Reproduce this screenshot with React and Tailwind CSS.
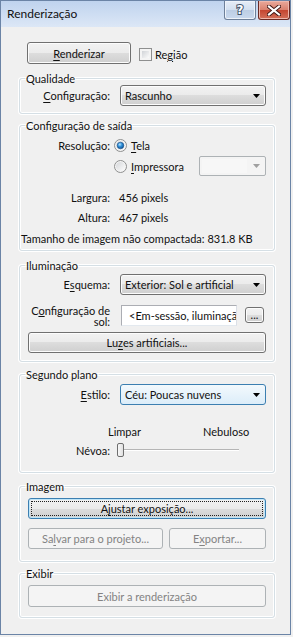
const btnBg = "bg-[linear-gradient(#f2f2f2_0%,#ebebeb_50%,#dddddd_50%,#cfcfcf_100%)]";

function Arrow({ color = "#000" }) {
  return (
    <svg width="7" height="4" viewBox="0 0 7 4">
      <polygon points="0,0 7,0 3.5,4" fill={color} />
    </svg>
  );
}

function Button({ children, className = "", disabled, focused }) {
  if (disabled) {
    return (
      <div className={`flex items-center justify-center whitespace-nowrap rounded-[3px] border border-[#adb2b5] bg-[#f4f4f4] text-[#838383] ${className}`}>
        {children}
      </div>
    );
  }
  return (
    <div
      className={`relative flex items-center justify-center whitespace-nowrap rounded-[3px] border ${
        focused ? "border-[#3c7fb1] shadow-[inset_0_0_0_1px_#bfe6f9]" : "border-[#707070] shadow-[inset_0_0_0_1px_#fcfcfc]"
      } ${btnBg} ${className}`}
    >
      {focused && <span className="absolute inset-[2px] border border-dotted border-[#222]" />}
      <span className="relative">{children}</span>
    </div>
  );
}

function Combo({ children, focused }) {
  return (
    <div
      className={`flex h-[21px] w-[146px] items-center rounded-[3px] border pl-[4px] pr-[5px] ${
        focused
          ? "border-[#3c7fb1] bg-[linear-gradient(#f3f9fd,#dcedf9)]"
          : `border-[#707070] shadow-[inset_0_0_0_1px_#fcfcfc] ${btnBg}`
      }`}
    >
      <span className="flex-1 truncate">{children}</span>
      <Arrow />
    </div>
  );
}

function Radio({ checked, id }) {
  return (
    <svg width="13" height="13" viewBox="0 0 13 13" className="shrink-0">
      <defs>
        <linearGradient id={`rg${id}`} x1="0" y1="0" x2="1" y2="1">
          <stop offset="0" stopColor="#d5d7da" />
          <stop offset="1" stopColor="#fcfcfc" />
        </linearGradient>
        <radialGradient id={`rd${id}`} cx="0.4" cy="0.35" r="0.7">
          <stop offset="0" stopColor="#b9e6ff" />
          <stop offset="0.45" stopColor="#2f8fd8" />
          <stop offset="1" stopColor="#0d4f8f" />
        </radialGradient>
      </defs>
      <circle cx="6.5" cy="6.5" r="6" fill="#f4f4f4" stroke="#8e8f8f" />
      <circle cx="6.5" cy="6.5" r="4.5" fill={`url(#rg${id})`} />
      {checked && <circle cx="6.5" cy="6.5" r="3.3" fill={`url(#rd${id})`} stroke="#1b4f86" strokeWidth="0.6" />}
    </svg>
  );
}

function Group({ title, children, className = "" }) {
  return (
    <fieldset className={`rounded-[3px] border border-[#d5dfe5] shadow-[0_0_0_1px_#ffffff,inset_0_0_0_1px_#ffffff] ${className}`}>
      <legend className="ml-[5px] px-[1px] leading-[15px]">{title}</legend>
      {children}
    </fieldset>
  );
}

function Label({ children }) {
  return <div className="w-[90px] shrink-0 whitespace-nowrap text-right">{children}</div>;
}

export default function App() {
  return (
    <div className="h-[637px] w-[293px] bg-[#f0f0f0] font-['Lato',sans-serif] text-[11px] leading-[15px] text-[#111]">
      <div className="flex h-[635px] w-[291px] flex-col border border-[#6b84a6] bg-[#f0f0f0]">
        {/* Title bar */}
        <div className="flex h-[26px] shrink-0 items-start bg-[linear-gradient(#bfd3ee,#dce7f6)]">
          <span className="ml-[6px] mt-[4px] flex-1 text-[12px] leading-[18px]">Renderização</span>
          <div className="flex gap-[2px]">
            <div className="flex h-[19px] w-[32px] items-center justify-center rounded-b-[3px] border border-t-0 border-[#6d7f99] bg-[linear-gradient(#e6edf7_0%,#d2dff0_50%,#bccde4_50%,#c9d9ee_100%)] shadow-[inset_0_0_0_1px_#eef3fa]">
              <span className="font-['DejaVu_Sans',sans-serif] text-[12px] font-bold leading-[14px] text-white [-webkit-text-stroke:2px_#44536a] [paint-order:stroke_fill]">?</span>
            </div>
            <div className="flex h-[19px] w-[32px] items-center justify-center rounded-b-[3px] border border-t-0 border-[#6b2a24] bg-[linear-gradient(#e9a99b_0%,#d9806d_50%,#c4442f_50%,#d3705a_100%)] shadow-[inset_0_0_0_1px_#eeb8ad]">
              <svg width="14" height="11" viewBox="0 0 14 11">
                <path d="M2 1.5 L12 9.5 M12 1.5 L2 9.5" stroke="#3d1512" strokeWidth="4" strokeLinecap="square" />
                <path d="M2 1.5 L12 9.5 M12 1.5 L2 9.5" stroke="#ffffff" strokeWidth="2.2" strokeLinecap="square" />
              </svg>
            </div>
          </div>
        </div>

        {/* Client */}
        <div className="flex flex-col pl-[18px] pr-[15px]">
          <div className="mt-[15px] flex h-[22px] items-center">
            <Button className="ml-[8px] h-[22px] w-[104px]">
              <u className="underline-offset-2">R</u>enderizar
            </Button>
            <div className="ml-[8px] mt-[2px] flex items-center gap-[3px]">
              <div className="h-[13px] w-[13px] border border-[#8e8f8f] bg-[#f4f4f4] p-[2px]">
                <div className="h-full w-full bg-[linear-gradient(135deg,#d0d3d7,#fbfbfb)]" />
              </div>
              <span>
                Re<u className="underline-offset-2">g</u>ião
              </span>
            </div>
          </div>

          <Group title="Qualidade" className="mt-[7px] pb-[7px]">
            <div className="-mt-px flex items-center">
              <Label>
                <u className="underline-offset-2">C</u>onfiguração:
              </Label>
              <div className="ml-[10px]">
                <Combo>Rascunho</Combo>
              </div>
            </div>
          </Group>

          <Group title="Configuração de saída" className="mt-[4px] pb-[2px]">
            <div className="mt-[2px] flex h-[20px] items-center">
              <Label>Resolução:</Label>
              <div className="ml-[4px] flex items-center gap-[4px]">
                <Radio checked id="a" />
                <span>
                  <u className="underline-offset-2">T</u>ela
                </span>
              </div>
            </div>
            <div className="flex h-[22px] items-center">
              <div className="ml-[94px] flex w-[85px] items-center gap-[4px]">
                <Radio id="b" />
                <span>
                  <u className="underline-offset-2">I</u>mpressora
                </span>
              </div>
              <div className="flex h-[20px] w-[67px] items-center rounded-[2px] border border-[#adb2b5] bg-[#f4f4f4] pr-[5px]">
                <div className="m-[2px] h-[14px] w-[45px] bg-[#f7f7f7]" />
                <div className="flex flex-1 justify-end">
                  <Arrow color="#a0a0a0" />
                </div>
              </div>
            </div>
            <div className="mt-[10px] flex h-[20px] items-center">
              <Label>Largura:</Label>
              <span className="ml-[9px]">456 pixels</span>
            </div>
            <div className="flex h-[20px] items-center">
              <Label>Altura:</Label>
              <span className="ml-[9px]">467 pixels</span>
            </div>
            <div className="mt-[1px] flex h-[20px] items-center whitespace-nowrap pl-[1px]">
              Tamanho de imagem não compactada: 831.8 KB
            </div>
          </Group>

          <Group title="Iluminação" className="mt-[7px] pb-[8px]">
            <div className="mt-[1px] flex items-center">
              <Label>
                E<u className="underline-offset-2">s</u>quema:
              </Label>
              <div className="ml-[10px]">
                <Combo>Exterior: Sol e artificial</Combo>
              </div>
            </div>
            <div className="mt-[10px] flex h-[21px] items-start">
              <div className="w-[90px] shrink-0 whitespace-nowrap text-right leading-[11px]">
                C<u className="underline-offset-1">o</u>nfiguração de
                <br />
                sol:
              </div>
              <div className="ml-[11px] flex h-[21px] w-[116px] items-center overflow-hidden whitespace-nowrap border border-[#abadb3] border-b-[#e3e9ef] border-r-[#dbdfe6] bg-white pl-[7px]">
                &lt;Em-sessão, iluminação solar&gt;
              </div>
              <Button className="ml-[8px] mt-[2px] h-[16px] w-[19px] leading-[10px]">...</Button>
            </div>
            <Button className="ml-[8px] mt-[6px] h-[21px] w-[238px]">
              Lu<u className="underline-offset-2">z</u>es artificiais...
            </Button>
          </Group>

          <Group title="Segundo plano" className="mt-[5px] pb-[14px]">
            <div className="mt-[2px] flex items-center">
              <Label>
                <u className="underline-offset-2">E</u>stilo:
              </Label>
              <div className="ml-[10px]">
                <Combo focused>Céu: Poucas nuvens</Combo>
              </div>
            </div>
            <div className="mt-[18px] flex h-[16px] items-center">
              <span className="ml-[88px] w-[95px]">Limpar</span>
              <span>Nebuloso</span>
            </div>
            <div className="mt-[3px] flex h-[16px] items-center">
              <Label>Névoa:</Label>
              <div className="relative ml-[7px] flex h-[16px] w-[122px] items-center">
                <div className="h-[2px] w-full border-t border-[#b5b5b5] bg-white" />
                <div className="absolute left-0 top-px h-[14px] w-[7px] rounded-[2px] border border-[#6e6e6e] bg-[linear-gradient(90deg,#f8f8f8,#e0e0e0)]" />
              </div>
            </div>
          </Group>

          <Group title="Imagem" className="mt-[6px] pb-[12px]">
            <Button focused className="ml-[8px] mt-[4px] h-[21px] w-[238px]">
              A<u className="underline-offset-2">j</u>ustar exposição...
            </Button>
            <div className="ml-[8px] mt-[9px] flex gap-[6px]">
              <Button disabled className="h-[21px] w-[135px]">
                Sa<u className="underline-offset-2">l</u>var para o projeto...
              </Button>
              <Button disabled className="h-[21px] w-[97px]">
                E<u className="underline-offset-2">x</u>portar...
              </Button>
            </div>
          </Group>

          <Group title="Exibir" className="mt-[4px] pb-[10px]">
            <Button disabled className="ml-[8px] mt-[4px] h-[22px] w-[238px]">
              Exibir a renderização
            </Button>
          </Group>
        </div>
      </div>
    </div>
  );
}
